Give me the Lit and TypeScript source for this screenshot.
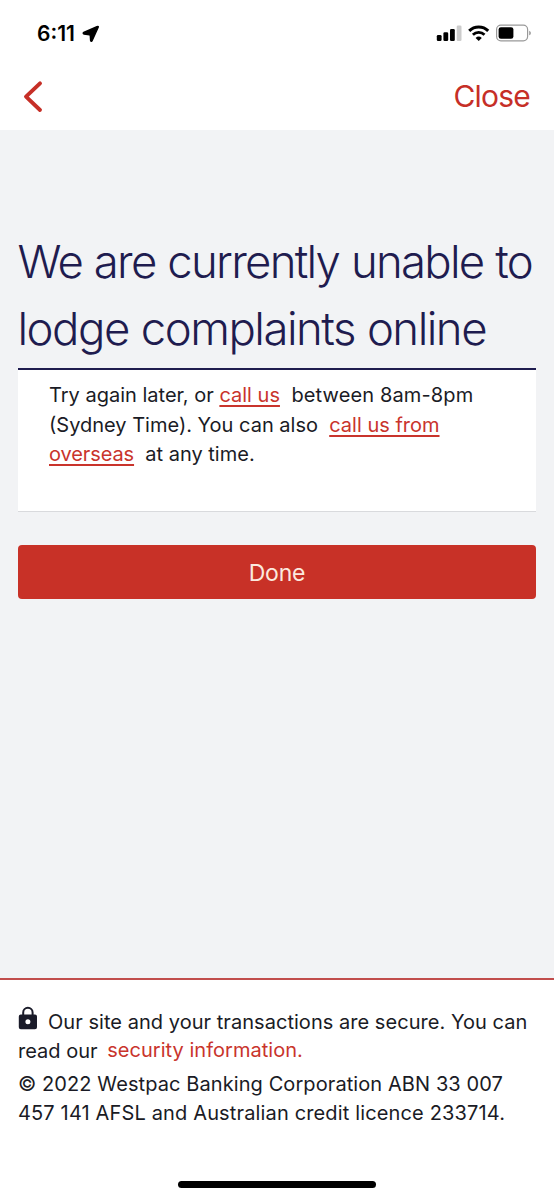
import { LitElement, html, css } from "lit";
import { customElement } from "lit/decorators.js";

@customElement("status-bar")
class StatusBar extends LitElement {
  static styles = css`
    :host { display: flex; justify-content: space-between; height: 66px; box-sizing: border-box; padding: 21px 22px 0 37px; color: #000; }
    .left, .right { display: flex; align-items: flex-start; }
    .time { font-size: 21px; line-height: 25px; font-weight: 600; width: 45px; white-space: nowrap; }
    svg { display: block; }
  `;
  render() {
    return html`
      <div class="left">
        <span class="time">6:11</span>
        <svg width="19" height="24" viewBox="82 21 19 24"><path d="M97.500 26.500 83.700 32.500c-.8.4-.6 1.500.3 1.600l5.500.8c.5.1.8.4.8.900l.3 4.700c.1.900 1.100 1.100 1.500.3l6.100-13.600c.3-.6-.1-1-.7-.7Z" fill="#000" stroke="#000" stroke-width="1.400" stroke-linejoin="round"/></svg>
      </div>
      <div class="right">
        <svg width="96" height="24" viewBox="436 21 96 24">
          <rect x="436.800" y="35" width="4.800" height="6" rx="1.300"/>
          <rect x="443.400" y="32.200" width="4.800" height="8.800" rx="1.300"/>
          <rect x="450" y="29" width="4.800" height="12" rx="1.300"/>
          <rect x="456.700" y="25.500" width="4.800" height="15.500" rx="1.300" fill="#ccc"/>
          <g fill="none" stroke="#000" stroke-width="3">
            <path d="M469.200 30.900a13.600 13.600 0 0 1 19 0"/>
            <path d="M472.900 34.700a8.400 8.400 0 0 1 11.600 0" stroke-width="2.800"/>
          </g>
          <path d="M478.700 41l-3.100-3.100a4.500 4.500 0 0 1 6.200 0Z"/>
          <rect x="496.600" y="25.100" width="31" height="15.700" rx="4.300" fill="none" stroke="#999" stroke-width="1.200"/>
          <rect x="498.600" y="27.200" width="14.800" height="11.600" rx="2.300"/>
          <path d="M529.200 30.700c2.200.8 2.200 3.800 0 4.600Z" fill="#999"/>
        </svg>
      </div>`;
  }
}

@customElement("app-root")
class AppRoot extends LitElement {
  static styles = css`
    :host { display: flex; flex-direction: column; width: 554px; height: 1200px; background: #fff; color: #1a1b25; font-family: Inter, "Liberation Sans", sans-serif; overflow: hidden; position: relative; }
    .nav { display: flex; justify-content: space-between; height: 64px; flex: none; padding: 0 24px 0 23px; }
    .back { display: block; margin-top: 14px; }
    .close { color: #c62f27; font-size: 30px; line-height: 36px; margin-top: 12px; letter-spacing: -0.800px; }
    .main { flex: none; height: 848px; box-sizing: border-box; background: #f2f3f5; padding: 99px 18px 0; }
    h1 { margin: 0; height: 139px; color: #1f1c4f; font-size: 45.500px; line-height: 66.500px; font-weight: 300; }
    .line { display: block; white-space: pre; }
    .h1a { letter-spacing: -1.720px; word-spacing: 0.600px; margin-left: -0.500px; }
    .h1b { letter-spacing: -1.500px; word-spacing: 0.700px; margin-left: -0.500px; }
    .card { height: 144px; box-sizing: border-box; background: #fff; border-top: 2px solid #1f1c4f; border-bottom: 1px solid #d9dadd; padding: 11px 31px 0; margin-bottom: 33px; }
    .text { font-size: 20px; line-height: 29.500px; margin: 0; }
    a { color: #c9342c; text-decoration: none; }
    .u { text-decoration: underline; text-decoration-thickness: 1.500px; text-underline-offset: 3px; text-decoration-skip-ink: none; }
    .tail { letter-spacing: 0.130px; }
    .ov { letter-spacing: -0.100px; }
    .done { display: block; width: 100%; height: 54px; border: 0; border-radius: 4px; background: #c83127; color: #fbe9df; font: 400 23px/54px Inter, sans-serif; letter-spacing: -0.200px; padding: 1px 0 0; text-align: center; }
    .footer { flex: 1; border-top: 2px solid #c14d4c; padding: 26px 18px 0; }
    .footer .text { line-height: 29px; }
    .lock { display: inline-block; vertical-align: -1px; margin-right: 10px; }
    .f1 { letter-spacing: 0.040px; }
    .f3 { letter-spacing: 0.090px; }
    .f4 { letter-spacing: 0.145px; }
    .legal { padding-top: 4px; }
    .sec { position: relative; top: -1px; margin-left: -1.500px; letter-spacing: 0.030px; }
    .home { position: absolute; left: 178px; top: 1181px; width: 198px; height: 7px; border-radius: 4px; background: #000; }
  `;
  render() {
    return html`
      <status-bar></status-bar>
      <div class="nav">
        <svg class="back" width="20" height="34" viewBox="0 0 20 34"><path d="M17 3.300 3 16.700 17 30" fill="none" stroke="#c62f27" stroke-width="3.900" stroke-linecap="round" stroke-linejoin="round"/></svg>
        <span class="close">Close</span>
      </div>
      <div class="main">
        <h1><span class="line h1a">We are currently unable to</span><span class="line h1b">lodge complaints online</span></h1>
        <div class="card">
          <p class="text"><span class="line">Try again later, or <a class="u">call us</a><span class="tail">  between 8am-8pm</span></span><span class="line">(Sydney Time). You can also  <a class="u">call us from</a></span><span class="line"><a class="u ov">overseas</a>  at any time.</span></p>
        </div>
        <button class="done">Done</button>
      </div>
      <div class="footer">
        <p class="text"><span class="line f1"><svg class="lock" width="20" height="24" viewBox="0 0 20 24"><path d="M5.200 10V6.500a4.700 4.700 0 0 1 9.400 0V10" fill="none" stroke="#1a1b29" stroke-width="2"/><path fill-rule="evenodd" d="M2.800 8.500h14.200q2 0 2 2v10.700q0 2-2 2H2.800q-2 0-2-2V10.500q0-2 2-2Zm7.100 4.800a2.500 2.500 0 1 0 0 5 2.500 2.500 0 0 0 0-5Z" fill="#1a1b29"/></svg>Our site and your transactions are secure. You can</span><span class="line">read our  <a class="sec">security information.</a></span></p>
        <p class="text legal"><span class="line f3">© 2022 Westpac Banking Corporation ABN 33 007</span><span class="line f4">457 141 AFSL and Australian credit licence 233714.</span></p>
      </div>
      <div class="home"></div>`;
  }
}
